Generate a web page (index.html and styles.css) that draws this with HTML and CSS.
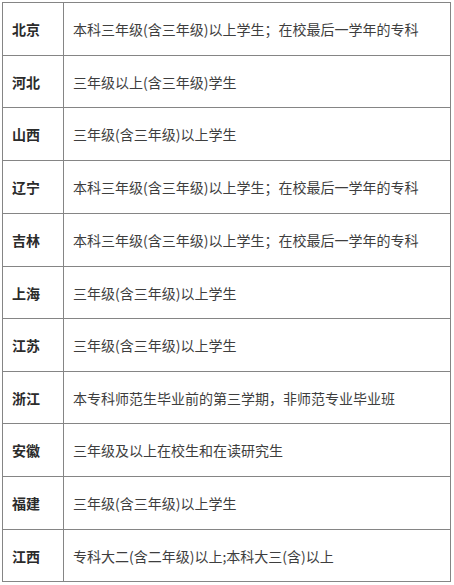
FILE: index.html
```html
<!DOCTYPE html>
<html lang="zh">
<head>
<meta charset="utf-8">
<link rel="stylesheet" href="styles.css">
</head>
<body>
<div class="table">
  <div class="cell name">北京</div><div class="cell desc">本科三年级(含三年级)以上学生；在校最后一学年的专科</div>
  <div class="cell name">河北</div><div class="cell desc">三年级以上(含三年级)学生</div>
  <div class="cell name">山西</div><div class="cell desc">三年级(含三年级)以上学生</div>
  <div class="cell name">辽宁</div><div class="cell desc">本科三年级(含三年级)以上学生；在校最后一学年的专科</div>
  <div class="cell name">吉林</div><div class="cell desc">本科三年级(含三年级)以上学生；在校最后一学年的专科</div>
  <div class="cell name">上海</div><div class="cell desc">三年级(含三年级)以上学生</div>
  <div class="cell name">江苏</div><div class="cell desc">三年级(含三年级)以上学生</div>
  <div class="cell name">浙江</div><div class="cell desc">本专科师范生毕业前的第三学期，非师范专业毕业班</div>
  <div class="cell name">安徽</div><div class="cell desc">三年级及以上在校生和在读研究生</div>
  <div class="cell name">福建</div><div class="cell desc">三年级(含三年级)以上学生</div>
  <div class="cell name">江西</div><div class="cell desc">专科大二(含二年级)以上;本科大三(含)以上</div>
</div>
</body>
</html>
```

FILE: styles.css
```css
html, body {
  margin: 0;
  padding: 0;
  background: #ffffff;
}
body {
  font-family: "Noto Sans CJK SC", "Noto Sans", sans-serif;
  font-size: 14px;
  color: #3e3e3e;
  overflow: hidden;
}
.table {
  margin: 2px 0 0 2px;
  width: 449px;
  display: grid;
  grid-template-columns: 61px 1fr;
  grid-template-rows: 53px 52px 53px 53px 53px 52px 53px 52px 53px 53px 52px;
  border-top: 1px solid #858585;
  border-left: 1px solid #858585;
  box-sizing: border-box;
}
.cell {
  box-sizing: border-box;
  border-right: 1px solid #858585;
  border-bottom: 1px solid #858585;
  padding: 0 8px 0 9px;
  display: flex;
  align-items: center;
  white-space: nowrap;
}
.name {
  font-weight: bold;
  color: #2b2b2b;
}
.desc {
  padding-left: 9px;
}
```
